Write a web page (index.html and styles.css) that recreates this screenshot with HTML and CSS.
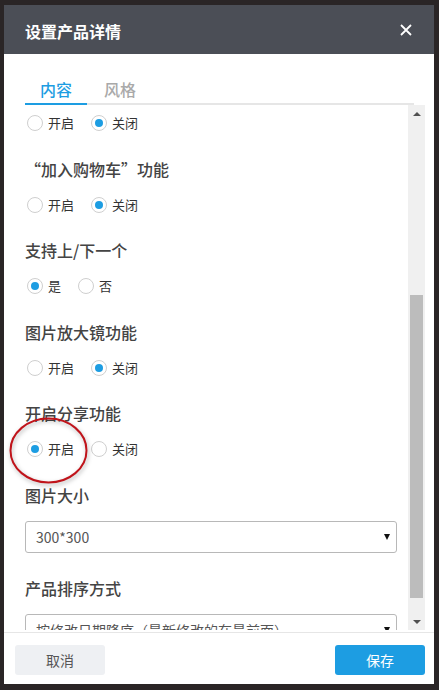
FILE: index.html
```html
<!DOCTYPE html>
<html lang="zh-CN">
<head>
<meta charset="utf-8">
<title>设置产品详情</title>
<link rel="stylesheet" href="styles.css">
</head>
<body>
<div class="dialog">
  <div class="dlg-header">
    <span class="dlg-title">设置产品详情</span>
    <svg class="close" width="12" height="12" viewBox="0 0 12 12"><path d="M1 1L11 11M11 1L1 11" stroke="#fff" stroke-width="1.8" fill="none"/></svg>
  </div>
  <div class="tabs">
    <div class="tab-list">
      <span class="tab active">内容</span>
      <span class="tab">风格</span>
    </div>
  </div>
  <div class="dlg-body">
    <div class="scroll">
      <div class="scroll-inner">
        <div class="radios">
          <label class="opt"><span class="radio"></span><span class="opt-text">开启</span></label>
          <label class="opt"><span class="radio checked"></span><span class="opt-text">关闭</span></label>
        </div>
        <div class="field">
          <div class="field-label">“加入购物车”功能</div>
          <div class="radios">
            <label class="opt"><span class="radio"></span><span class="opt-text">开启</span></label>
            <label class="opt"><span class="radio checked"></span><span class="opt-text">关闭</span></label>
          </div>
        </div>
        <div class="field">
          <div class="field-label">支持上/下一个</div>
          <div class="radios">
            <label class="opt"><span class="radio checked"></span><span class="opt-text">是</span></label>
            <label class="opt"><span class="radio"></span><span class="opt-text">否</span></label>
          </div>
        </div>
        <div class="field">
          <div class="field-label">图片放大镜功能</div>
          <div class="radios">
            <label class="opt"><span class="radio"></span><span class="opt-text">开启</span></label>
            <label class="opt"><span class="radio checked"></span><span class="opt-text">关闭</span></label>
          </div>
        </div>
        <div class="field">
          <div class="field-label">开启分享功能</div>
          <div class="radios">
            <label class="opt"><span class="radio checked"></span><span class="opt-text">开启</span></label>
            <label class="opt"><span class="radio"></span><span class="opt-text">关闭</span></label>
          </div>
        </div>
        <div class="field">
          <div class="field-label">图片大小</div>
          <div class="select"><span class="select-text">300*300</span><span class="caret"></span></div>
        </div>
        <div class="field">
          <div class="field-label">产品排序方式</div>
          <div class="select"><span class="select-text">按修改日期降序（最新修改的在最前面）</span><span class="caret"></span></div>
        </div>
      </div>
    </div>
    <div class="scrollbar">
      <div class="sb-btn"><span class="sb-up"></span></div>
      <div class="sb-track"><div class="sb-thumb"></div></div>
      <div class="sb-btn"><span class="sb-down"></span></div>
    </div>
  </div>
  <div class="dlg-footer">
    <button class="btn btn-cancel">取消</button>
    <button class="btn btn-save">保存</button>
  </div>
  <svg class="mark" width="81" height="69" viewBox="0 0 81 69"><ellipse cx="40.5" cy="34.5" rx="38" ry="32" fill="none" stroke="#c0141b" stroke-width="2"/></svg>
</div>
</body>
</html>
```
FILE: styles.css
```css
* { box-sizing: border-box; }
html, body { margin: 0; padding: 0; }
body {
  background: #2a2526;
  padding: 5px 5px 6px 4px;
  font-family: "Noto Sans CJK SC", "Noto Sans", "Liberation Sans", sans-serif;
  width: 439px;
  height: 690px;
  overflow: hidden;
}
.dialog {
  position: relative;
  width: 430px;
  height: 679px;
  background: #fff;
  display: flex;
  flex-direction: column;
}
.dlg-header {
  height: 49px;
  flex: none;
  background: #4b4e56;
  display: flex;
  align-items: center;
  justify-content: space-between;
  padding: 3px 22px 0 21px;
}
.dlg-title {
  color: #fff;
  font-size: 16px;
  font-weight: bold;
  line-height: 20px;
}
.close { display: block; margin-top: -3px; }
.tabs {
  flex: none;
  padding: 23px 20px 0 21px;
}
.tab-list {
  display: flex;
  border-bottom: 2px solid #e6e6e6;
}
.tab {
  width: 62px;
  text-align: center;
  font-size: 16px;
  font-weight: 500;
  line-height: 24px;
  padding-bottom: 2px;
  margin-bottom: -2px;
  border-bottom: 2px solid transparent;
  color: #a9a9a9;
}
.tab + .tab { margin-left: 2px; }
.tab.active {
  color: #1d9de2;
  border-bottom-color: #1d9de2;
}
.dlg-body {
  flex: none;
  height: 527px;
  display: flex;
  padding: 0 9px 0 21px;
}
.scroll {
  flex: 1;
  overflow: hidden;
  height: 525px;
}
.scroll-inner { padding-top: 8px; }
.radios {
  display: flex;
  align-items: center;
  height: 20px;
}
.opt {
  display: inline-flex;
  align-items: center;
  margin-left: 2px;
  margin-right: 15px;
}
.radio {
  width: 16px;
  height: 16px;
  border-radius: 50%;
  border: 1px solid #cfcfcf;
  background: #fff;
  display: inline-flex;
  align-items: center;
  justify-content: center;
}
.radio.checked::after {
  content: "";
  width: 8px;
  height: 8px;
  border-radius: 50%;
  background: #1d9de2;
}
.opt-text {
  margin-left: 5px;
  font-size: 13px;
  color: #333;
  line-height: 20px;
}
.mark {
  position: absolute;
  left: 3.5px;
  top: 410.5px;
  filter: drop-shadow(1px 2px 2px rgba(0,0,0,0.3));
}
.field { margin-top: 23.5px; }
.field-label {
  font-size: 16px;
  font-weight: 500;
  line-height: 24px;
  color: #444;
  margin-bottom: 14px;
}
.select {
  height: 32px;
  margin-right: 11px;
  border: 1px solid #b8b8b8;
  border-radius: 3px;
  padding: 0 6px 0 10px;
  display: flex;
  align-items: center;
  justify-content: space-between;
}
.select-text {
  font-size: 14px;
  color: #555;
  white-space: nowrap;
  overflow: hidden;
}
.caret {
  flex: none;
  width: 0;
  height: 0;
  border-top: 6px solid #111;
  border-left: 3.5px solid transparent;
  border-right: 3.5px solid transparent;
}
.scrollbar {
  width: 17px;
  height: 525px;
  flex: none;
  background: #f0f0f0;
  display: flex;
  flex-direction: column;
}
.sb-btn {
  height: 17px;
  flex: none;
  display: flex;
  align-items: center;
  justify-content: center;
}
.sb-up {
  width: 0; height: 0;
  border-bottom: 4px solid #505050;
  border-left: 4px solid transparent;
  border-right: 4px solid transparent;
}
.sb-down {
  width: 0; height: 0;
  border-top: 4px solid #505050;
  border-left: 4px solid transparent;
  border-right: 4px solid transparent;
}
.sb-track { flex: 1; }
.sb-thumb {
  margin: 173px 2px 0 2px;
  height: 303px;
  background: #bcbcbc;
}
.dlg-footer {
  flex: 1;
  border-top: 1px solid #e6e6e6;
  display: flex;
  justify-content: space-between;
  align-items: flex-start;
  padding: 12px 9px 0 11px;
}
.btn {
  width: 90px;
  height: 30px;
  border: none;
  border-radius: 3px;
  font-family: inherit;
  font-size: 14px;
  padding: 0;
}
.btn-cancel { background: #eef0f3; color: #555; }
.btn-save { background: #1d9de2; color: #fff; }
```
